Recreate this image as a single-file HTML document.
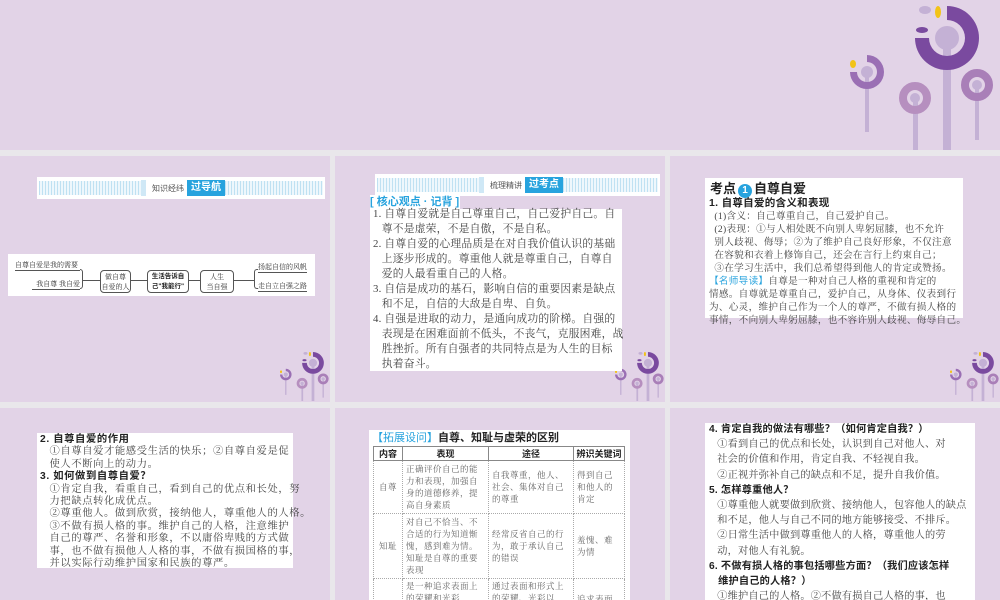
<!DOCTYPE html>
<html style="width:1000px;height:600px;overflow:hidden"><head><meta charset="utf-8">
<style>
*{margin:0;padding:0;box-sizing:border-box}
body{width:1000px;height:600px;overflow:hidden;background:#e9e7eb;position:relative;font-family:"Liberation Serif","Noto Serif CJK SC",serif;color:#333}
.bg{position:absolute;background:#e2d3e7}
.abs{position:absolute}
.w{position:absolute;background:#fff}
.hdr{position:absolute;background:#fff;height:22px}
.hdr .st{position:absolute;left:2px;right:2px;top:4px;height:14px;background:repeating-linear-gradient(90deg,#bfe1f2 0 1px,#eef7fc 1px 3px)}
.hdr .lb{position:absolute;top:3px;height:16px;background:#fff;display:flex;align-items:center;font-family:"Liberation Sans","Noto Sans CJK SC",sans-serif;font-size:8px;color:#555;padding-left:6px;border-left:5px solid #cfe8f6}
.hdr .lb b{background:#27a3de;color:#fff;font-size:10px;padding:1px 4px;margin-left:3px;height:16px;line-height:14px}
.t{font-size:11px;line-height:15px;white-space:nowrap;color:#444}
.bh{font-family:"Liberation Sans","Noto Sans CJK SC",sans-serif;font-weight:bold;color:#222}
.blue{color:#27a3de;font-family:"Liberation Sans","Noto Sans CJK SC",sans-serif}
table{border-collapse:collapse;font-size:8.5px;color:#666;line-height:12px;table-layout:fixed}
td{border:1px dotted #aaa;vertical-align:middle;padding:1px 3px;letter-spacing:0.5px;overflow:hidden}
th{border:1px solid #888;font-family:"Liberation Sans","Noto Sans CJK SC",sans-serif;font-size:9px;color:#222;height:14px}
.box{position:absolute;border:1px solid #555;border-radius:4px;font-size:7px;line-height:10px;text-align:center;background:#fff;display:flex;align-items:center;justify-content:center;white-space:nowrap}
.mm{position:absolute;font-size:7px;white-space:nowrap;border-bottom:1px solid #555;line-height:10px}
</style></head><body>
<div class="bg" style="left:0;top:0;width:1000px;height:150px"></div>
<div class="bg" style="left:0;top:156px;width:330px;height:246px"></div>
<div class="bg" style="left:335px;top:156px;width:330px;height:246px"></div>
<div class="bg" style="left:670px;top:156px;width:330px;height:246px"></div>
<div class="bg" style="left:0;top:408px;width:330px;height:192px"></div>
<div class="bg" style="left:335px;top:408px;width:330px;height:192px"></div>
<div class="bg" style="left:670px;top:408px;width:330px;height:192px"></div>

<svg class="abs" style="left:0;top:0" width="1000" height="600">
<defs>
<g id="fl">
<rect x="943" y="38" width="8" height="112" fill="#c4b1d5"/>
<path d="M947 6 A32 32 0 1 1 915 38 L929 38 A18 18 0 1 0 947 20 Z" fill="#7a4a9f"/>
<circle cx="947" cy="38" r="12" fill="#c4b1d5"/>
<ellipse cx="925" cy="10" rx="6" ry="4" fill="#c4b1d5"/>
<ellipse cx="922" cy="30" rx="6" ry="3" fill="#7a4a9f"/>
<ellipse cx="938" cy="12" rx="3" ry="6" fill="#f2c318"/>
<rect x="865" y="72" width="4" height="60" fill="#c4b1d5"/>
<path d="M867 55 A17 17 0 1 1 850 72 L857 72 A10 10 0 1 0 867 62 Z" fill="#9a6fb4"/>
<circle cx="867" cy="72" r="6" fill="#c4b1d5"/>
<ellipse cx="853" cy="64" rx="3" ry="4" fill="#f2c318"/>
<rect x="913" y="98" width="5" height="52" fill="#c4b1d5"/>
<circle cx="915" cy="98" r="12" fill="none" stroke="#b68fbf" stroke-width="8"/>
<circle cx="915" cy="98" r="5" fill="#c4b1d5"/>
<rect x="975" y="85" width="4" height="55" fill="#c4b1d5"/>
<circle cx="977" cy="85" r="12" fill="none" stroke="#a97fb8" stroke-width="8"/>
<circle cx="977" cy="85" r="5" fill="#c4b1d5"/>
</g>
</defs>
<use href="#fl"/>
<g transform="translate(-9,350) scale(0.34)"><use href="#fl"/></g>
<g transform="translate(326,350) scale(0.34)"><use href="#fl"/></g>
<g transform="translate(661,350) scale(0.34)"><use href="#fl"/></g>
</svg>

<!-- row1 left -->
<div class="hdr" style="left:37px;top:177px;width:288px"><div class="st"></div><div class="lb" style="left:104px">知识经纬<b>过导航</b></div></div>
<div class="w" style="left:8px;top:254px;width:307px;height:42px"></div>
<div class="mm" style="left:15px;top:260px;width:65px">自尊自爱是我的需要</div>
<div class="mm" style="left:32px;top:279px;width:48px;text-align:right">我自尊 我自爱</div>
<div class="abs" style="left:80px;top:269px;width:3px;height:20px;border:1px solid #555;border-left:none;border-radius:0 3px 3px 0"></div>
<div class="abs" style="left:83px;top:280px;width:172px;border-top:1px solid #555"></div>
<div class="box" style="left:100px;top:270px;width:31px;height:23px">做自尊<br>自爱的人</div>
<div class="box bh" style="left:147px;top:270px;width:42px;height:23px;font-size:6.5px">生活告诉自<br>己"我能行"</div>
<div class="box" style="left:200px;top:270px;width:34px;height:23px">人生<br>当自强</div>
<div class="abs" style="left:254px;top:269px;width:4px;height:20px;border:1px solid #555;border-right:none;border-radius:3px 0 0 3px"></div>
<div class="mm" style="left:258px;top:262px">扬起自信的风帆</div>
<div class="mm" style="left:258px;top:281px">走自立自强之路</div>

<!-- row1 middle -->
<div class="hdr" style="left:375px;top:174px;width:285px"><div class="st"></div><div class="lb" style="left:104px">梳理精讲<b>过考点</b></div></div>
<div class="w" style="left:370px;top:195px;width:90px;height:14px"></div>
<div class="abs blue" style="left:370px;top:195px;font-size:11px;line-height:14px;font-weight:bold">[ 核心观点 · 记背 ]</div>
<div class="w" style="left:370px;top:209px;width:252px;height:94px"></div>
<div class="w" style="left:370px;top:295px;width:252px;height:76px"></div>
<div class="abs t" style="left:373px;top:207px;font-size:10.8px;letter-spacing:0.2px">
1. 自尊自爱就是自己尊重自己，自己爱护自己。自<br>
&nbsp;&nbsp;&nbsp;尊不是虚荣，不是自傲，不是自私。<br>
2. 自尊自爱的心理品质是在对自我价值认识的基础<br>
&nbsp;&nbsp;&nbsp;上逐步形成的。尊重他人就是尊重自己，自尊自<br>
&nbsp;&nbsp;&nbsp;爱的人最看重自己的人格。<br>
3. 自信是成功的基石，影响自信的重要因素是缺点<br>
&nbsp;&nbsp;&nbsp;和不足，自信的大敌是自卑、自负。<br>
4. 自强是进取的动力，是通向成功的阶梯。自强的<br>
&nbsp;&nbsp;&nbsp;表现是在困难面前不低头，不丧气，克服困难，战<br>
&nbsp;&nbsp;&nbsp;胜挫折。所有自强者的共同特点是为人生的目标<br>
&nbsp;&nbsp;&nbsp;执着奋斗。</div>

<!-- row1 right -->
<div class="w" style="left:705px;top:178px;width:258px;height:140px"></div>
<div class="abs bh" style="left:710px;top:181px;font-size:13px;line-height:16px">考点<span style="display:inline-block;width:14px;height:14px;border-radius:50%;background:#27a3de;color:#fff;font-size:10px;text-align:center;line-height:14px;margin:0 2px">1</span>自尊自爱</div>
<div class="abs t" style="left:709px;top:197px;font-size:9.6px;line-height:13px;letter-spacing:0.3px">
<span class="bh" style="font-size:10.5px">1. 自尊自爱的含义和表现</span><br>
&nbsp;&nbsp;(1)含义：自己尊重自己，自己爱护自己。<br>
&nbsp;&nbsp;(2)表现：①与人相处既不向别人卑躬屈膝，也不允许<br>
&nbsp;&nbsp;别人歧视、侮辱；②为了维护自己良好形象，不仅注意<br>
&nbsp;&nbsp;在容貌和衣着上修饰自己，还会在言行上约束自己；<br>
&nbsp;&nbsp;③在学习生活中，我们总希望得到他人的肯定或赞扬。<br>
<span class="blue">【名师导读】</span>自尊是一种对自己人格的重视和肯定的<br>
情感。自尊就是尊重自己，爱护自己，从身体、仪表到行<br>
为、心灵，维护自己作为一个人的尊严，不做有损人格的<br>
事情，不向别人卑躬屈膝，也不容许别人歧视、侮辱自己。</div>

<!-- row2 left -->
<div class="w" style="left:37px;top:433px;width:256px;height:135px"></div>
<div class="abs t" style="left:40px;top:434px;font-size:10.3px;line-height:12.4px;letter-spacing:0.6px">
<span class="bh">2. 自尊自爱的作用</span><br>
&nbsp;&nbsp;&nbsp;①自尊自爱才能感受生活的快乐；②自尊自爱是促<br>
&nbsp;&nbsp;&nbsp;使人不断向上的动力。<br>
<span class="bh">3. 如何做到自尊自爱？</span><br>
&nbsp;&nbsp;&nbsp;①肯定自我，看重自己，看到自己的优点和长处，努<br>
&nbsp;&nbsp;&nbsp;力把缺点转化成优点。<br>
&nbsp;&nbsp;&nbsp;②尊重他人。做到欣赏，接纳他人，尊重他人的人格。<br>
&nbsp;&nbsp;&nbsp;③不做有损人格的事。维护自己的人格，注意维护<br>
&nbsp;&nbsp;&nbsp;自己的尊严、名誉和形象，不以庸俗卑贱的方式做<br>
&nbsp;&nbsp;&nbsp;事，也不做有损他人人格的事，不做有损国格的事，<br>
&nbsp;&nbsp;&nbsp;并以实际行动维护国家和民族的尊严。</div>

<!-- row2 middle -->
<div class="w" style="left:369px;top:430px;width:261px;height:170px"></div>
<div class="abs bh" style="left:372px;top:431px;font-size:11px;line-height:14px;font-weight:bold"><span class="blue" style="font-weight:normal">【拓展设问】</span>自尊、知耻与虚荣的区别</div>
<table class="abs" style="left:373px;top:446px;width:251px">
<colgroup><col style="width:29px"><col style="width:86px"><col style="width:85px"><col style="width:51px"></colgroup>
<tr><th>内容</th><th>表现</th><th>途径</th><th>辨识关键词</th></tr>
<tr style="height:53px"><td style="text-align:center">自尊</td><td>正确评价自己的能力和表现，加强自身的道德修养，提高自身素质</td><td>自我尊重，他人、社会、集体对自己的尊重</td><td>得到自己和他人的肯定</td></tr>
<tr style="height:65px"><td style="text-align:center">知耻</td><td>对自己不恰当、不合适的行为知道惭愧，感到难为情。知耻是自尊的重要表现</td><td>经常反省自己的行为，敢于承认自己的错误</td><td>羞愧、难为情</td></tr>
<tr style="height:40px"><td></td><td style="vertical-align:top">是一种追求表面上的荣耀和光彩</td><td style="vertical-align:top">通过表面和形式上的荣耀、光彩以</td><td>追求表面</td></tr>
</table>

<!-- row2 right -->
<div class="w" style="left:705px;top:423px;width:270px;height:177px"></div>
<div class="abs t" style="left:709px;top:422px;font-size:10.2px;line-height:15.2px;letter-spacing:0.2px">
<span class="bh">4. 肯定自我的做法有哪些？（如何肯定自我？）</span><br>
&nbsp;&nbsp;&nbsp;①看到自己的优点和长处，认识到自己对他人、对<br>
&nbsp;&nbsp;&nbsp;社会的价值和作用，肯定自我、不轻视自我。<br>
&nbsp;&nbsp;&nbsp;②正视并弥补自己的缺点和不足，提升自我价值。<br>
<span class="bh">5. 怎样尊重他人？</span><br>
&nbsp;&nbsp;&nbsp;①尊重他人就要做到欣赏、接纳他人，包容他人的缺点<br>
&nbsp;&nbsp;&nbsp;和不足，他人与自己不同的地方能够接受、不排斥。<br>
&nbsp;&nbsp;&nbsp;②日常生活中做到尊重他人的人格，尊重他人的劳<br>
&nbsp;&nbsp;&nbsp;动，对他人有礼貌。<br>
<span class="bh">6. 不做有损人格的事包括哪些方面？（我们应该怎样<br>
&nbsp;&nbsp;&nbsp;维护自己的人格？）</span><br>
&nbsp;&nbsp;&nbsp;①维护自己的人格。②不做有损自己人格的事，也</div>
</body></html>
